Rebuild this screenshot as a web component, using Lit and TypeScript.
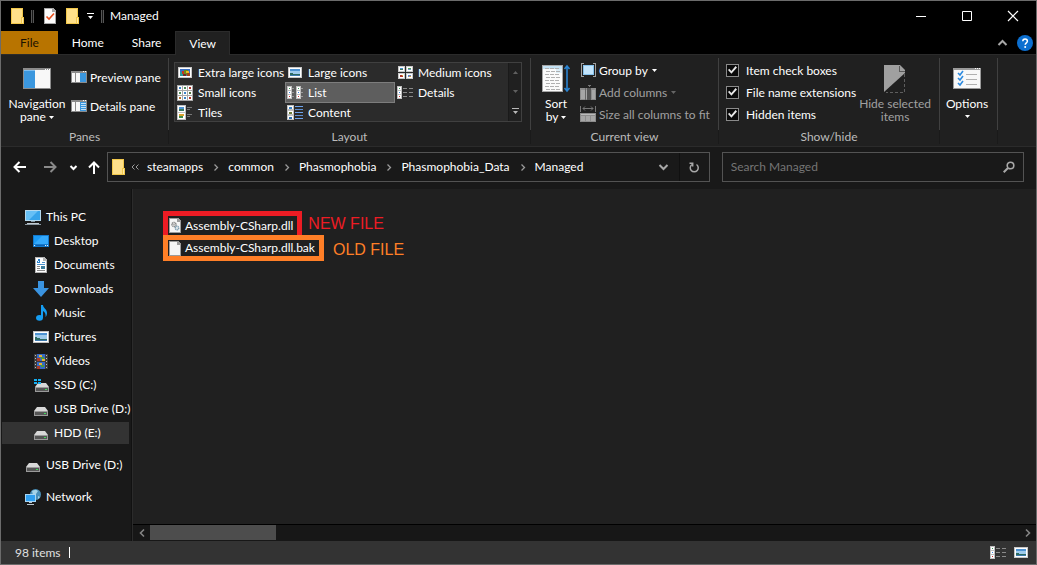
import { LitElement, html, css, svg, TemplateResult } from "lit";
import { customElement, state } from "lit/decorators.js";
import { classMap } from "lit/directives/class-map.js";

/* ---------- icon helpers ---------- */

const icon = (w: number, h: number, body: unknown, crisp = true) => html`
  <svg width=${w} height=${h} viewBox="0 0 ${w} ${h}" aria-hidden="true"
    shape-rendering=${crisp ? "crispEdges" : "auto"}>${body}</svg>`;

const rect = (x: number, y: number, w: number, h: number, fill: string) =>
  svg`<rect x=${x} y=${y} width=${w} height=${h} fill=${fill} />`;

const folder = () => icon(13, 16, svg`
  ${rect(0, 0, 12, 16, "#f2c84b")}${rect(1, 1, 10, 14, "#ffe08a")}
  ${rect(10, 9, 3, 7, "#f2c84b")}${rect(11, 10, 1, 5, "#ffe9a8")}`);

const checkedPage = () => icon(12, 16, svg`
  <path d="M0 0h9l3 3v13H0z" fill="#a8a8a8" /><path d="M1 1h7v3h3v11H1z" fill="#fbfbfb" />
  <path d="M2.500 8.500l2.500 2.500 5-5.500" stroke="#e8501e" stroke-width="1.600" fill="none" shape-rendering="auto" />`);

const caret = () => icon(5, 3, svg`<path d="M0 0h5L2.500 3z" fill="currentColor" />`, false);
const caretUp = () => icon(5, 3, svg`<path d="M0 3h5L2.500 0z" fill="currentColor" />`, false);
const caretBar = () => icon(7, 6, svg`<path d="M0 0h7v1H0zM1 3h5L3.500 6z" fill="currentColor" />`, false);

const navPane = () => icon(28, 21, svg`
  ${rect(0, 0, 28, 21, "#8c8c8c")}${rect(1, 2, 11, 18, "#3b97de")}${rect(1, 2, 11, 1, "#7fbef0")}
  ${rect(12, 2, 15, 18, "#f8f8f8")}${rect(22, 1, 1, 1, "#fff")}${rect(24, 1, 1, 1, "#fff")}${rect(26, 1, 1, 1, "#fff")}`);

const sidePane = (lines: boolean) => icon(16, 12, svg`
  ${rect(0, 0, 16, 12, "#8c8c8c")}${rect(1, 2, 3, 9, "#f8f8f8")}${rect(5, 2, 4, 9, "#f8f8f8")}
  ${rect(9, 2, 6, 9, "#3b97de")}${rect(12, 0, 1, 1, "#fff")}${rect(14, 0, 1, 1, "#fff")}
  ${lines ? [3, 5, 7, 9].map((y) => rect(10, y, 5, 1, "#c4e2f8")) : ""}`);

const landscape = (x: number, y: number, w: number, h: number) => svg`
  ${rect(x, y, w, h, "#9fcbec")}${rect(x, y, w, Math.ceil(h / 4), "#4e93d2")}
  <path d="M${x} ${y + h / 2}l${w / 2} ${h / 4}h${w / 2}v${h / 4}H${x}z" fill="#2d6b62" />
  <path d="M${x} ${y + h}h${w}v-1H${x}z" fill="#3d79ad" />`;

const pictureFrame = () => icon(14, 11, svg`
  ${rect(0, 0, 14, 11, "#c8c8c8")}${rect(1, 1, 12, 9, "#fff")}${landscape(2, 2, 10, 7)}`);

const parrotFrame = () => icon(14, 11, svg`
  ${rect(0, 0, 14, 11, "#c8c8c8")}${rect(1, 1, 12, 9, "#fff")}${rect(2, 2, 10, 7, "#3a6fc4")}
  ${rect(2, 5, 4, 4, "#2b9a9a")}${rect(4, 4, 3, 3, "#c8341e")}${rect(6, 3, 4, 5, "#6b8a21")}
  ${rect(8, 4, 3, 2, "#f0bb1c")}${rect(9, 6, 3, 3, "#a3431c")}${rect(5, 7, 3, 2, "#702b24")}`);

const mediumGrid = () => icon(15, 13, svg`
  ${[0, 8].map((x) => [0, 7].map((y) => svg`${rect(x, y, 7, 6, "#c8c8c8")}${rect(x + 1, y + 1, 5, 4, "#fff")}`))}
  ${rect(2, 2, 3, 1, "#4e93d2")}${rect(2, 3, 3, 1, "#3c7a5b")}${rect(10, 2, 3, 1, "#4f9f54")}${rect(10, 3, 3, 1, "#7294c8")}
  ${rect(2, 9, 3, 2, "#b0342a")}${rect(4, 9, 1, 1, "#e6a92a")}${rect(10, 9, 3, 2, "#6484c8")}${rect(11, 10, 2, 1, "#d79832")}`);

const smallGrid = () => {
  const dots = ["#3d83c6", "#4d8b5a", "#b0342a", "#4d8b5a", "#3d83c6", "#54733f", "#b56d2a", "#3d83c6", "#b0342a"];
  return icon(16, 16, svg`${rect(0, 0, 16, 16, "#a9a9a9")}
    ${dots.map((c, i) => {
      const x = 1 + (i % 3) * 5, y = 1 + Math.floor(i / 3) * 5;
      return svg`${rect(x, y, 4, 4, "#fff")}${rect(x + 1, y + 1, 2, 2, c)}`;
    })}`);
};

const strip = (x: number, h = 13) => svg`${rect(x, 0, 5, h, "#c0c0c0")}
  ${["#3c9a5c", "#3d83e0", "#d03030"].map((c, i) => svg`${rect(x + 1, 1 + i * 4, 3, 3, "#fff")}${rect(x + 2, 2 + i * 4, 1, 1, c)}`)}`;

const listIcon = () => icon(16, 13, svg`${strip(0)}${strip(9)}
  ${[2, 6, 10].map((y) => svg`${rect(5, y, 2, 1, "#9a9a9a")}${rect(14, y, 2, 1, "#9a9a9a")}`)}`);

const detailsIcon = () => icon(16, 13, svg`${strip(0)}
  ${[2, 6, 10].map((y) => svg`${rect(6, y, 4, 1, "#8a8a8a")}${rect(12, y, 4, 1, "#8a8a8a")}`)}`);

const tilesIcon = () => icon(16, 15, svg`
  ${[0, 7].map((y) => svg`${rect(0, y, 9, 8, "#c0c0c0")}${rect(1, y + 1, 7, 6, "#fff")}`)}
  ${rect(2, 2, 5, 2, "#4e93d2")}${rect(2, 4, 5, 2, "#39785f")}${rect(2, 9, 5, 2, "#d8a12e")}${rect(2, 11, 4, 2, "#3f8a4b")}
  ${rect(10, 2, 5, 1, "#777")}${rect(10, 4, 3, 1, "#777")}${rect(10, 9, 5, 1, "#777")}${rect(10, 11, 3, 1, "#777")}`);

const contentIcon = () => icon(16, 15, svg`${rect(0, 0, 7, 15, "#c0c0c0")}
  ${["#3d83c6", "#6d7d3c", "#2f6fae"].map((c, i) => svg`${rect(1, 1 + i * 5, 5, 3, "#fff")}${rect(2, 2 + i * 5, 3, 2, c)}`)}
  ${[1, 4, 7, 10, 13].map((y, i) => rect(8, y, 8, 1, i % 2 ? "#5f8fd0" : "#6ea4ee"))}`);

const sortIcon = () => icon(28, 28, svg`
  ${rect(0, 0, 21, 27, "#a6a6a6")}${rect(1, 1, 19, 25, "#fafafa")}${rect(1, 1, 19, 3, "#c4e2f4")}${rect(14, 4, 6, 4, "#dceef8")}
  ${[3, 6, 9, 12, 15, 18, 21, 24].map((y, i) => [3, 8, 13].map((x) => rect(x + (i % 2), y, 4, 1, "#b0b0b0")))}
  <path d="M25 1v25M22.500 4L25 1l2.500 3M22.500 23L25 26l2.500-3" stroke="#2a83d0" stroke-width="1.600" fill="none" shape-rendering="auto" />`);

const groupIcon = () => icon(15, 14, svg`
  <path d="M3 .500H.500v13H3M12 .500h2.500v13H12" fill="none" stroke="#a0a0a0" />
  ${rect(2, 2, 11, 10, "#86c2ec")}${rect(3, 3, 9, 8, "#c3e4fb")}`);

const addColumnsIcon = () => icon(16, 15, svg`
  ${rect(0, 3, 16, 12, "#8c8c8c")}${rect(1, 5, 4, 9, "#a6a6a6")}${rect(6, 5, 1, 9, "#a6a6a6")}
  ${rect(7, 3, 4, 12, "#555")}${rect(5, 3, 1, 12, "#666")}${rect(12, 5, 3, 9, "#a6a6a6")}
  <path d="M7 0h5L9.500 2z" fill="#777" />`);

const sizeColumnsIcon = () => icon(16, 16, svg`
  ${rect(0, 0, 1, 6, "#777")}${rect(15, 0, 1, 6, "#777")}
  <path d="M3 2.500h10M5 .500l-2 2 2 2M11 .500l2 2-2 2" stroke="#777" fill="none" shape-rendering="auto" />
  ${rect(0, 7, 16, 9, "#8c8c8c")}${rect(1, 8, 14, 1, "#bbb")}${[1, 6, 11].map((x) => rect(x, 10, 4, 5, "#a6a6a6"))}`);

const hideIcon = () => icon(22, 28, svg`
  <path d="M0 0h16l5 5v3L0 27z" fill="#a0a0a0" shape-rendering="auto" />
  <path d="M15.500 1v5h5" fill="none" stroke="#5a5a5a" />
  <path d="M20.500 9v18.500H2" fill="none" stroke="#5e5e5e" stroke-dasharray="3 2" />`);

const optionsIcon = () => icon(28, 21, svg`
  ${rect(0, 0, 28, 21, "#9a9a9a")}${rect(1, 2, 26, 18, "#f8f8f8")}
  ${[22, 24, 26].map((x) => rect(x, 0, 1, 1, "#fff"))}
  ${[5, 10, 15].map((y) => rect(13, y + 1, 11, 1, "#b0b0b0"))}
  ${[5, 10, 15].map((y) => svg`<path d="M5 ${y}l2 2 3-4" stroke="#2d8be0" stroke-width="1.600" fill="none" shape-rendering="auto" />`)}`);

const stroked = (w: number, h: number, d: string, width = 1) =>
  icon(w, h, svg`<path d=${d} stroke="currentColor" stroke-width=${width} fill="none" />`, false);

const pcIcon = () => icon(16, 15, svg`
  ${rect(0, 0, 16, 11, "#b5d9ee")}${rect(1, 1, 14, 9, "#37a4ea")}
  <path d="M1 1h12L4 10H1z" fill="#66c0f6" shape-rendering="auto" />
  ${rect(6, 11, 4, 1, "#8296a2")}${rect(2, 13, 12, 1, "#c3ccd2")}${rect(0, 14, 16, 1, "#8b99a2")}`);

const desktopIcon = () => icon(16, 12, svg`
  ${rect(0, 0, 16, 12, "#1479cc")}${rect(1, 1, 14, 8, "#1a9af5")}
  <path d="M1 9L9 1h6v8z" fill="#35a9fb" shape-rendering="auto" />
  ${rect(1, 10, 1, 1, "#e8f4ff")}${rect(3, 10, 9, 1, "#0a5fae")}${rect(12, 10, 1, 1, "#e8f4ff")}${rect(14, 10, 1, 1, "#e8f4ff")}`);

const documentsIcon = () => icon(12, 16, svg`
  <path d="M0 0h9l3 3v13H0z" fill="#b5b5b5" /><path d="M1 1h7v3h3v11H1z" fill="#fff" />
  <path d="M2 6l2-4 1 4M3 5h2" stroke="#2a83d0" fill="none" />
  ${rect(7, 5, 3, 1, "#4a90cc")}${rect(2, 7, 8, 1, "#4a90cc")}${rect(2, 9, 3, 1, "#888")}${rect(2, 11, 3, 1, "#888")}
  ${rect(6, 9, 4, 3, "#3d7d9c")}${rect(2, 13, 8, 1, "#888")}`);

const downloadsIcon = () => icon(14, 16, svg`<path d="M4 0h6v7h5L7 16 -1 7h5z" fill="#3a93e0" />`, false);

const musicIcon = () => icon(11, 16, svg`
  <ellipse cx="3.500" cy="12.800" rx="3.500" ry="2.900" fill="#159df2" />
  <path d="M5 0h2c0 3 4 4 4 8 0 1.500-.500 3-1.500 4 .500-3-.500-5-2.500-6v7H5z" fill="#159df2" />`, false);

const picturesIcon = () => icon(16, 12, svg`
  ${rect(0, 0, 16, 12, "#c0c0c0")}${rect(1, 1, 14, 10, "#fff")}${landscape(2, 2, 12, 8)}`);

const videosIcon = () => icon(14, 15, svg`
  ${rect(0, 0, 14, 15, "#3c3c3c")}
  ${[1, 4, 7, 10, 13].map((y) => svg`${rect(1, y, 1, 1, "#bbb")}${rect(12, y, 1, 1, "#bbb")}`)}
  ${rect(3, 0, 8, 7, "#3569c8")}${rect(3, 8, 8, 7, "#3569c8")}
  ${rect(5, 1, 3, 2, "#e8b62c")}${rect(7, 3, 3, 2, "#4a9b3c")}${rect(3, 4, 3, 3, "#a83a28")}${rect(8, 5, 3, 2, "#e8b62c")}
  ${rect(5, 9, 3, 2, "#e8b62c")}${rect(7, 11, 3, 2, "#4a9b3c")}${rect(3, 12, 3, 3, "#a83a28")}`);

const driveBody = (x: number, y: number) => svg`
  <path d="M${x + 3} ${y}h8l3 4H${x}z" fill="#d8d8d8" shape-rendering="auto" />
  ${rect(x, y + 4, 14, 5, "#9a9a9a")}${rect(x + 1, y + 5, 12, 3, "#555")}${rect(x + 10, y + 6, 2, 1, "#3fdc5a")}`;
const driveIcon = () => icon(14, 13, driveBody(0, 4));
const systemDriveIcon = () => icon(15, 13, svg`${driveBody(1, 4)}
  ${rect(0, 0, 3, 2, "#12b0f4")}${rect(4, 0, 3, 2, "#12b0f4")}${rect(0, 3, 3, 2, "#12b0f4")}${rect(4, 3, 3, 2, "#12b0f4")}`);

const networkIcon = () => icon(16, 16, svg`
  <circle cx="10.500" cy="5.500" r="5.500" fill="#4a8fb8" /><path d="M7 2c2-1.500 5-1.500 6 0l-2 3-3 1zM13 7l2 1-2 2z" fill="#a5d3e8" />
  <path d="M0 5h11v8H0z" fill="#a9d6f3" /><path d="M1 6h9v6H1z" fill="#2f9ff0" />
  <path d="M4 13h3v1H4zM2 15h7v1H2z" fill="#b9c6ce" />`, false);

const pageIcon = (gears: boolean) => icon(12, 15, svg`
  <path d="M0 0h9l3 3v12H0z" fill="#9c9c9c" /><path d="M1 1h7v3h3v10H1z" fill="#f5f5f5" />
  ${gears ? svg`<g shape-rendering="auto" fill="none"><circle cx="5" cy="6.500" r="2" stroke="#8a8a8a" stroke-width="1.600" stroke-dasharray="1.200 .400" />
    <circle cx="5" cy="6.500" r=".7" fill="#8a8a8a" />
    <circle cx="8" cy="10" r="1.700" stroke="#7f9fb2" stroke-width="1.500" stroke-dasharray="1.200 .400" /></g>` : ""}`);

/* ---------- data ---------- */

interface Named { label: string; icon: () => TemplateResult; }
interface Place extends Named { level?: "root"; spaced?: boolean; current?: boolean; }

const LAYOUTS: Named[] = [
  { label: "Extra large icons", icon: parrotFrame },
  { label: "Large icons", icon: pictureFrame },
  { label: "Medium icons", icon: mediumGrid },
  { label: "Small icons", icon: smallGrid },
  { label: "List", icon: listIcon },
  { label: "Details", icon: detailsIcon },
  { label: "Tiles", icon: tilesIcon },
  { label: "Content", icon: contentIcon },
];

const PLACES: Place[] = [
  { label: "This PC", icon: pcIcon, level: "root" },
  { label: "Desktop", icon: desktopIcon },
  { label: "Documents", icon: documentsIcon },
  { label: "Downloads", icon: downloadsIcon },
  { label: "Music", icon: musicIcon },
  { label: "Pictures", icon: picturesIcon },
  { label: "Videos", icon: videosIcon },
  { label: "SSD (C:)", icon: systemDriveIcon },
  { label: "USB Drive (D:)", icon: driveIcon },
  { label: "HDD (E:)", icon: driveIcon, current: true },
  { label: "USB Drive (D:)", icon: driveIcon, level: "root", spaced: true },
  { label: "Network", icon: networkIcon, level: "root", spaced: true },
];

const CRUMBS = ["steamapps", "common", "Phasmophobia", "Phasmophobia_Data", "Managed"];

const shared = css`
  * { box-sizing: border-box; }
  svg { display: block; flex: none; overflow: visible; }
  button, input { font: inherit; color: inherit; background: none; border: 0; margin: 0; padding: 0; }
  button { display: flex; align-items: center; white-space: nowrap; }
  a { color: inherit; text-decoration: none; white-space: nowrap; }
`;

/* ---------- ribbon ---------- */

@customElement("explorer-ribbon")
export class ExplorerRibbon extends LitElement {
  @state() private layout = "List";

  static styles = [shared, css`
    :host { display: flex; height: 93px; padding-top: 3px; background: #202020; border-top: 1px solid #2b2b2b; border-bottom: 1px solid #2b2b2b; line-height: 13px; }
    .group { display: flex; flex-direction: column; flex: none; position: relative; height: 86px; border-right: 1px solid #1a1a1a; }
    .group::after { content: ""; position: absolute; right: -1px; top: 0; width: 1px; height: 72px; background: #404040; }
    .panes { width: 168px; }
    .layout { width: 362px; }
    .view { width: 188px; }
    .show { width: 221px; }
    .options { width: 58px; }
    .body { display: flex; height: 73px; }
    .view .body { padding-left: 1px; }
    .show .body { padding-left: 7px; }
    .title { text-align: center; color: #bcbcbc; line-height: 14px; }
    .big { flex-direction: column; flex: none; text-align: center; }
    .big .pic { display: flex; justify-content: center; align-items: flex-end; height: 31px; margin-bottom: 8px; }
    .big .pic.tall { height: 35px; margin-bottom: 4px; }
    .big .caption svg { display: inline-block; vertical-align: 2px; }
    .wide { width: 70px; padding-left: 2px; }
    .sort { width: 48px; }
    .hide { margin: 0 8px 0 auto; }
    .opt { width: 54px; }
    .opt svg { margin-top: 5px; }
    .opt .pic svg { margin: 0; }
    .stack { display: flex; flex-direction: column; }
    .stack button { gap: 3px; }
    .slot { display: flex; justify-content: center; flex: none; width: 16px; }
    .stack.two { gap: 13px; padding-top: 11px; }
    .stack.two button { height: 16px; }
    .stack.three { gap: 6px; padding-top: 4px; }
    .stack.three button, .stack.three label { height: 16px; }
    .off { color: #a0a0a0; }
    .off .caret { color: #666; }
    .caret { padding-left: 1px; }
    .gallery { display: flex; width: 348px; height: 60px; margin: 4px 0 0 5px; border: 1px solid #404040; }
    .choices { display: grid; grid-template-columns: repeat(3, 110px); grid-auto-rows: 20px; width: 333px; height: 60px; margin: -1px 0; background: #2b2b2b; border-block: 1px solid #404040; }
    .choices button { gap: 5px; padding-left: 1px; border: 1px solid transparent; margin-top: -1px; }
    .choices button.on { background: #5e5e5e; border-color: #7d7d7d; }
    .scroll { display: flex; flex: 1; flex-direction: column; background: #202020; border-left: 1px solid #1a1a1a; }
    .scroll button { flex: 1; justify-content: center; color: #606060; }
    .scroll button:last-child { color: #b8b8b8; }
    label { display: flex; align-items: center; gap: 7px; white-space: nowrap; }
    input { appearance: none; flex: none; display: grid; width: 13px; height: 13px; border: 1px solid #8a8a8a; background: #0a0a0a; place-items: center; }
    input:checked::before { content: ""; width: 9px; height: 9px; background: #e6e6e6; clip-path: polygon(0 50%, 14% 36%, 38% 60%, 84% 6%, 100% 22%, 38% 92%); }
  `];

  render() {
    return html`
      <section class="group panes">
        <div class="body">
          <button class="big wide"><span class="pic">${navPane()}</span>
            <span class="caption">Navigation<br />pane ${caret()}</span></button>
          <div class="stack two">
            <button><span class="slot">${sidePane(false)}</span>Preview pane</button>
            <button><span class="slot">${sidePane(true)}</span>Details pane</button>
          </div>
        </div>
        <div class="title">Panes</div>
      </section>
      <section class="group layout">
        <div class="body">
          <div class="gallery">
            <div class="choices">
              ${LAYOUTS.map((l) => html`
                <button class=${classMap({ on: l.label === this.layout })} @click=${() => (this.layout = l.label)}>
                  <span class="slot">${l.icon()}</span>${l.label}</button>`)}
            </div>
            <div class="scroll">
              <button aria-label="Scroll up">${caretUp()}</button>
              <button aria-label="Scroll down">${caret()}</button>
              <button aria-label="More layouts">${caretBar()}</button>
            </div>
          </div>
        </div>
        <div class="title">Layout</div>
      </section>
      <section class="group view">
        <div class="body">
          <button class="big sort"><span class="pic tall">${sortIcon()}</span>
            <span class="caption">Sort<br />by ${caret()}</span></button>
          <div class="stack three">
            <button><span class="slot">${groupIcon()}</span>Group by<span class="caret">${caret()}</span></button>
            <button class="off"><span class="slot">${addColumnsIcon()}</span>Add columns<span class="caret">${caret()}</span></button>
            <button class="off"><span class="slot">${sizeColumnsIcon()}</span>Size all columns to fit</button>
          </div>
        </div>
        <div class="title">Current view</div>
      </section>
      <section class="group show">
        <div class="body">
          <div class="stack three">
            <label><input type="checkbox" checked />Item check boxes</label>
            <label><input type="checkbox" checked />File name extensions</label>
            <label><input type="checkbox" checked />Hidden items</label>
          </div>
          <button class="big hide off"><span class="pic tall">${hideIcon()}</span>
            <span class="caption">Hide selected<br />items</span></button>
        </div>
        <div class="title">Show/hide</div>
      </section>
      <section class="group options">
        <button class="big opt"><span class="pic">${optionsIcon()}</span><span>Options</span>${caret()}</button>
      </section>`;
  }
}

/* ---------- window ---------- */

@customElement("app-root")
export class AppRoot extends LitElement {
  static styles = [shared, css`
    :host { display: flex; flex-direction: column; box-sizing: border-box; min-height: 100vh; border: 1px solid #6b6b6b; background: #191919; color: #fff; font: 12px/16px Lato, "Open Sans", sans-serif; }
    .titlebar { display: flex; align-items: center; height: 30px; padding-left: 10px; background: #000; }
    .bar { width: 3px; height: 13px; background: #151515; border-inline: 1px solid #555; }
    .quick { display: flex; align-items: center; }
    .quick .page { margin: 0 10px; }
    .quick .more { margin: 0 7px 0 8px; }
    .quick .bar:first-of-type { margin-left: 7px; }
    h1 { margin: 0 auto 0 6px; font-size: 12px; font-weight: 400; }
    .window { display: flex; }
    .window button { justify-content: center; width: 46px; height: 29px; }
    .tabs { display: flex; height: 23px; background: #000; }
    .tabs button { padding: 0 13px; border: 1px solid transparent; border-width: 1px 1px 0; }
    .tabs .file { padding: 0 18px; background: #b87400; color: #1c1200; }
    .tabs .open { position: relative; margin-bottom: -1px; background: #202020; border-color: #2b2b2b; }
    .tabs .fold { margin-left: auto; padding: 0 9px; color: #a8a8a8; }
    .tabs .help { padding: 0 3px 0 0; border: 0; }
    .address { display: flex; align-items: center; height: 42px; padding: 0 12px 2px; }
    .address > button { flex: none; }
    .back { margin-right: 18px; }
    .forward { margin-right: 13px; color: #8a8a8a; }
    .recent { margin-right: 11px; }
    .path { display: flex; flex: 2; align-items: center; height: 30px; margin: 0 12px 0 7px; border: 1px solid #535353; }
    .path > svg { margin-left: 4px; }
    .crumbs { display: flex; align-items: center; flex: 1; margin-left: 6px; }
    .crumbs svg { color: #9a9a9a; }
    .crumbs a:first-of-type { margin-left: 8px; }
    .crumbs .sep { margin: 0 10px 0 11px; }
    .path button { justify-content: center; width: 30px; height: 28px; color: #a8a8a8; }
    .path .reload { border-left: 1px solid #101010; }
    .search { display: flex; flex: 1; align-items: center; height: 30px; border: 1px solid #535353; color: #a8a8a8; }
    .search input { flex: 1; min-width: 0; padding-left: 8px; outline: none; }
    .search input::placeholder { color: #757575; opacity: 1; }
    .search svg { margin-right: 8px; }
    .main { display: flex; flex: 1; }
    nav { flex: none; width: 131px; padding: 16px 2px 0 1px; border-right: 1px solid #111; }
    nav a { display: flex; align-items: center; gap: 5px; height: 22px; margin: 1px 0 2px; padding-left: 31px; }
    nav a.root { padding-left: 23px; }
    nav a.spaced { margin-top: 10px; }
    nav a.current { background: #333; }
    .slot { display: flex; justify-content: center; flex: none; width: 16px; }
    .content { display: flex; flex: 1; flex-direction: column; min-width: 0; background: #202020; border-left: 1px solid #2b2b2b; }
    ul { flex: 1; list-style: none; margin: 0; padding: 22px 0 0 30px; }
    li { display: flex; align-items: flex-end; font-family: "Liberation Sans", Arial, sans-serif; font-size: 16px; line-height: 22px; }
    li a { display: flex; align-items: center; gap: 4px; border: 5px solid; padding: 0 4px 0 1px; font: 12px/16px Lato, "Open Sans", sans-serif; }
    li span { color: #fff; }
    .new { color: #ed1c24; gap: 6px; height: 24px; }
    .new a { height: 24px; border-bottom: 0; }
    .old { color: #ff7f27; gap: 9px; height: 26px; }
    .old a { height: 26px; }
    .hscroll { display: flex; height: 17px; background: #171717; border-top: 1px solid #000; }
    .hscroll button { justify-content: center; width: 17px; height: 16px; color: #858585; }
    .hscroll .thumb { flex: none; width: 14%; height: 15px; background: #4d4d4d; }
    .hscroll .end { margin-left: auto; }
    footer { display: flex; align-items: center; height: 23px; padding: 0 8px 0 14px; background: #333; color: #e0e0e0; }
    footer i { width: 1px; height: 11px; margin-left: 8px; background: #fff; }
    footer .modes { display: flex; gap: 8px; margin-left: auto; }
  `];

  render() {
    return html`
      <header class="titlebar">
        <div class="quick">${folder()}<div class="bar"></div>
          <button class="page" aria-label="Properties">${checkedPage()}</button>
          <button aria-label="New folder">${folder()}</button>
          <button class="more" aria-label="Customize toolbar">${caretBar()}</button>
          <div class="bar"></div></div>
        <h1>Managed</h1>
        <div class="window">
          <button aria-label="Minimize">${stroked(10, 10, "M0 5.500h10")}</button>
          <button aria-label="Maximize">${stroked(10, 10, "M.500 .500h9v9h-9z")}</button>
          <button aria-label="Close">${stroked(10, 10, "M0 0l10 10M10 0L0 10", 1.2)}</button>
        </div>
      </header>
      <div class="tabs">
        <button class="file">File</button><button>Home</button><button>Share</button><button class="open">View</button>
        <button class="fold" aria-label="Collapse ribbon">${stroked(9, 6, "M.500 5l4-4 4 4", 2)}</button>
        <button class="help" aria-label="Help">${icon(16, 16, svg`
          <circle cx="8" cy="8" r="8" fill="#0c6fd0" />
          <path d="M5.800 6.200c0-3 4.600-3 4.600 0 0 1.600-2.200 1.700-2.200 3.600" stroke="#fff" stroke-width="1.500" fill="none" />
          <circle cx="8.200" cy="12" r="1" fill="#fff" />`, false)}</button>
      </div>
      <explorer-ribbon></explorer-ribbon>
      <div class="address">
        <button class="back" aria-label="Back">${stroked(13, 12, "M13 6H1.500M6.500 1l-5 5 5 5", 2)}</button>
        <button class="forward" aria-label="Forward">${stroked(13, 12, "M0 6h11.500M6.500 1l5 5-5 5", 2)}</button>
        <button class="recent" aria-label="Recent locations">${stroked(7, 5, "M.500 1l3 3 3-3", 2)}</button>
        <button class="up" aria-label="Up">${stroked(12, 13, "M6 13V1.500M1 6.500l5-5 5 5", 2)}</button>
        <div class="path">${folder()}
          <div class="crumbs">
            ${stroked(8, 6, "M3.500 .500L1 3l2.500 2.500M7.500 .500L5 3l2.500 2.500")}
            ${CRUMBS.map((c, i) => html`${i ? html`<span class="sep">${stroked(4, 7, "M.500 .500l3 3-3 3", 1.3)}</span>` : ""}<a href="#">${c}</a>`)}
          </div>
          <button aria-label="Previous locations">${stroked(9, 6, "M.500 1l4 4 4-4", 2)}</button>
          <button class="reload" aria-label="Refresh">${stroked(10, 11, "M7.500 2.500a4 4 0 1 1-4.500 0M.500 1.200h3.200v3.300", 1.5)}</button>
        </div>
        <label class="search"><input type="text" placeholder="Search Managed" aria-label="Search Managed" />
          ${icon(12, 12, svg`<circle cx="7.500" cy="4.500" r="3.300" stroke="currentColor" stroke-width="1.600" fill="none" />
            <path d="M5 7L.700 11.300" stroke="currentColor" stroke-width="2" />`, false)}</label>
      </div>
      <div class="main">
        <nav>${PLACES.map((p) => html`
          <a href="#" class=${classMap({ root: p.level === "root", spaced: !!p.spaced, current: !!p.current })}>
            <span class="slot">${p.icon()}</span>${p.label}</a>`)}</nav>
        <div class="content">
          <ul>
            <li class="new"><a href="#">${pageIcon(true)}<span>Assembly-CSharp.dll</span></a>NEW FILE</li>
            <li class="old"><a href="#">${pageIcon(false)}<span>Assembly-CSharp.dll.bak</span></a>OLD FILE</li>
          </ul>
          <div class="hscroll">
            <button aria-label="Scroll left">${stroked(6, 8, "M5 .500L1.500 4 5 7.500", 1.6)}</button>
            <div class="thumb"></div>
            <button class="end" aria-label="Scroll right">${stroked(6, 8, "M1 .500L4.500 4 1 7.500", 1.6)}</button>
          </div>
        </div>
      </div>
      <footer>98 items<i></i>
        <div class="modes">
          <button aria-label="Details view">${detailsIcon()}</button>
          <button aria-label="Large icons view">${pictureFrame()}</button>
        </div>
      </footer>`;
  }
}
